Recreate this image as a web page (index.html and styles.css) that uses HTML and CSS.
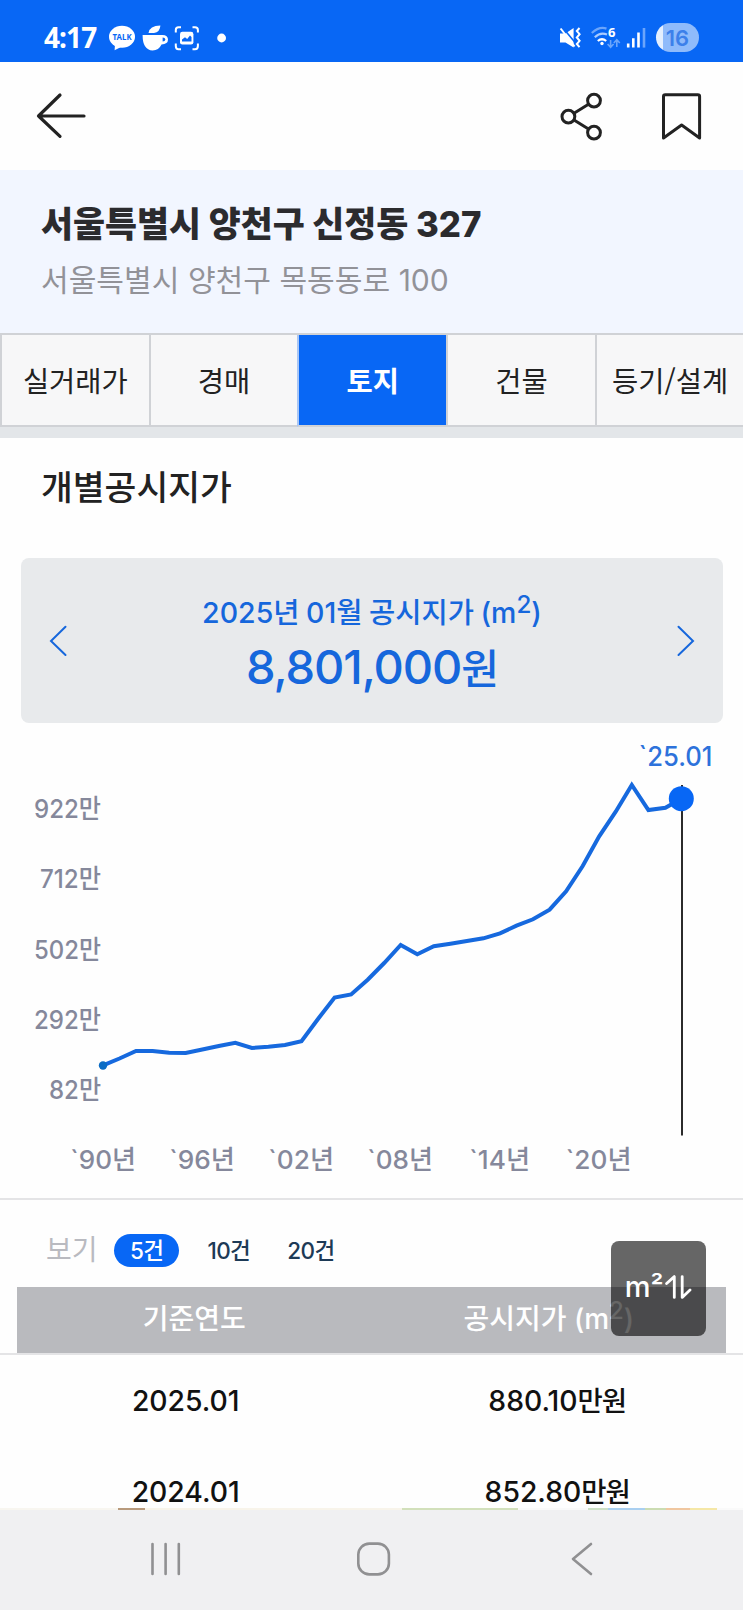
FILE: index.html
```html
<!DOCTYPE html>
<html lang="ko">
<head>
    <meta charset="UTF-8">
    <meta name="viewport" content="width=device-width, initial-scale=1.0">
    <title>개별공시지가</title>
    <link rel="stylesheet" href="styles.css">
</head>
<body>
    <div class="status-bar">
        <span class="time">4:17</span>
        <svg class="status-left" width="130" height="32" viewBox="104 22 130 32">
            <ellipse cx="122" cy="36.8" rx="13" ry="11" fill="#fff"/>
            <path d="M115 44 L114.6 50.3 L123 46 Z" fill="#fff"/>
            <text x="112.6" y="40" font-size="8.6" font-weight="700" textLength="19" lengthAdjust="spacingAndGlyphs" fill="#0867f5">TALK</text>
            <path d="M142.6 35 H162.4 Q168 35.2 168 39.6 Q168 44.2 161.5 44.6 Q158.8 50.5 152.6 50.5 Q142.6 50 142.6 35 Z" fill="#fff"/>
            <path d="M162.6 37.6 V41.6 Q165.3 41.5 165.3 39.6 Q165.3 37.6 162.6 37.6 Z" fill="#0867f5"/>
            <path d="M148.5 33 Q149.5 25.4 160.4 25.4 Q160 32 154 33 Z" fill="#fff"/>
            <path d="M175.8 32.5 V30 Q175.8 27.3 178.5 27.3 H181 M192.5 27.3 H195 Q197.9 27.3 197.9 30 V32.5 M197.9 43.5 V46 Q197.9 49.2 195 49.2 H192.5 M181 49.2 H178.5 Q175.8 49.2 175.8 46 V43.5" fill="none" stroke="#fff" stroke-width="2"/>
            <rect x="180" y="31.8" width="13.4" height="12.8" rx="2.4" fill="#fff"/>
            <path d="M182 41.5 V39.5 L185 37.2 L187.2 39 L190 35.5 L191.5 37 V41.5 Z" fill="#0867f5"/>
            <circle cx="221.6" cy="38" r="4.4" fill="#fff"/>
        </svg>
        <svg class="status-right" width="92" height="32" viewBox="558 22 92 32">
            <path d="M560 33.5 H565.5 L573.6 28 V47.5 L565.5 42.5 H560 Z" fill="#fff"/>
            <path d="M562.6 27.5 L575.5 43" stroke="#0867f5" stroke-width="1.6"/>
            <path d="M560.6 28.5 L574.6 46.5" stroke="#fff" stroke-width="2"/>
            <path d="M579.5 28 L576.8 31 L579.6 34.2 L576.8 37.5 L579.6 40.8 L576.8 44 L579.5 47.2" fill="none" stroke="#fff" stroke-width="2"/>
            <path d="M591.8 33 Q599.5 26 606.5 28.6" fill="none" stroke="#6ba5fb" stroke-width="2.2"/>
            <path d="M594.8 37.3 Q600.5 31.8 607 34.6" fill="none" stroke="#a9cbfd" stroke-width="2.2"/>
            <path d="M597.8 41 Q602 37.5 606.2 41" fill="none" stroke="#fff" stroke-width="2.2"/>
            <circle cx="602" cy="43.5" r="1.7" fill="#fff"/>
            <text x="608" y="37" font-size="13" font-weight="700" fill="#fff">6</text>
            <path d="M610.6 40 V47 M607.6 44 L610.6 47.3 L613.6 44 M616.8 47 V40 M613.8 43 L616.8 39.7 L619.8 43" fill="none" stroke="#6ba5fb" stroke-width="1.6"/>
            <path d="M628.2 43.5 V47.6 M633.3 38.2 V47.6 M638.5 32.6 V47.6" stroke="#fff" stroke-width="2.6"/>
            <path d="M644 28 V47.6" stroke="#6ba5fb" stroke-width="2.6"/>
        </svg>
        <span class="battery">16</span>
    </div>

    <header class="app-bar">
        <svg width="52" height="48" viewBox="35 92 52 48" fill="none" stroke="#222" stroke-width="3.2" stroke-linecap="round" stroke-linejoin="round">
            <path d="M60 95 L38.5 116 L60 136.3 M38.5 116 H84"/>
        </svg>
        <div class="app-actions">
            <svg width="44" height="50" viewBox="560 91 44 50" fill="none" stroke="#222" stroke-width="3">
                <circle cx="568.4" cy="116.6" r="6.4"/>
                <circle cx="594" cy="100.6" r="6.4"/>
                <circle cx="594" cy="132.6" r="6.4"/>
                <path d="M574 113.2 L588.5 104.2 M574 120 L588.5 129"/>
            </svg>
            <svg width="44" height="50" viewBox="660 91 44 50" fill="none" stroke="#222" stroke-width="3" stroke-linejoin="round">
                <path d="M663.5 138 V96.5 Q663.5 94.7 665.3 94.7 H697.8 Q699.6 94.7 699.6 96.5 V138 L681.6 125 Z"/>
            </svg>
        </div>
    </header>

    <section class="address">
        <h1>서울특별시 양천구 신정동 327</h1>
        <p>서울특별시 양천구 목동동로 100</p>
    </section>

    <nav class="tabs">
        <a class="tab">실거래가</a>
        <a class="tab">경매</a>
        <a class="tab active">토지</a>
        <a class="tab">건물</a>
        <a class="tab">등기/설계</a>
    </nav>

    <main class="content">
        <h2>개별공시지가</h2>

        <div class="price-card">
            <svg width="18" height="32" viewBox="0 0 18 32" fill="none" stroke="#1667dc" stroke-width="2" stroke-linecap="round">
                <path d="M16.5 1.8 L2 16 L16.5 30"/>
            </svg>
            <div class="price-text">
                <div class="price-label">2025년 01월 공시지가 (m<sup>2</sup>)</div>
                <div class="price-value">8,801,000<span>원</span></div>
            </div>
            <svg width="18" height="32" viewBox="0 0 18 32" fill="none" stroke="#1667dc" stroke-width="2" stroke-linecap="round">
                <path d="M1.5 1.8 L16 16 L1.5 30"/>
            </svg>
        </div>

        <svg class="chart" width="743" height="475" viewBox="0 723 743 475">
            <g class="axis">
                <text x="34" y="818" textLength="67" lengthAdjust="spacingAndGlyphs">922만</text>
                <text x="40" y="888" textLength="61" lengthAdjust="spacingAndGlyphs">712만</text>
                <text x="34" y="958.5" textLength="67" lengthAdjust="spacingAndGlyphs">502만</text>
                <text x="34" y="1028.5" textLength="67" lengthAdjust="spacingAndGlyphs">292만</text>
                <text x="49" y="1098.5" textLength="52" lengthAdjust="spacingAndGlyphs">82만</text>
                <text x="70" y="1168.5" textLength="66" lengthAdjust="spacingAndGlyphs">`90년</text>
                <text x="169" y="1168.5" textLength="66" lengthAdjust="spacingAndGlyphs">`96년</text>
                <text x="268" y="1168.5" textLength="66" lengthAdjust="spacingAndGlyphs">`02년</text>
                <text x="367" y="1168.5" textLength="66" lengthAdjust="spacingAndGlyphs">`08년</text>
                <text x="469" y="1168.5" textLength="61" lengthAdjust="spacingAndGlyphs">`14년</text>
                <text x="565.5" y="1168.5" textLength="66" lengthAdjust="spacingAndGlyphs">`20년</text>
            </g>
            <path d="M682 785 V1135.5" stroke="#2b2b2b" stroke-width="2"/>
            <polyline fill="none" stroke="#1669de" stroke-width="4" points="103,1065.3 119.5,1058.5 136,1051 152.6,1051 169.2,1052.8 185.7,1053 202.3,1049.5 218.8,1046 235.3,1042.8 251.9,1048 268.4,1046.8 285,1045 301.5,1041.3 318,1019 334.6,997.5 351.1,994.4 367.7,979.7 384.2,963 400.7,945 417.3,954.3 433.8,946.3 450.4,943.7 466.9,941 483.4,938.3 500,933.3 516.5,925.7 533,919.3 549.6,909.7 566.1,891.3 582.7,866 599.2,836.3 615.7,811.7 631.8,785 648.4,810 665.4,807.7 681.5,798.7"/>
            <circle cx="103" cy="1065.5" r="4.2" fill="#0c6cc4"/>
            <circle cx="681.3" cy="798.7" r="12.5" fill="#0867f5"/>
            <text class="marker" x="638.5" y="766" textLength="74" lengthAdjust="spacingAndGlyphs">`25.01</text>
        </svg>

        <div class="filter">
            <span class="filter-title">보기</span>
            <span class="chip on">5건</span>
            <span class="chip">10건</span>
            <span class="chip">20건</span>
        </div>

        <div class="table">
            <div class="row head">
                <div>기준연도</div>
                <div>공시지가 (m<sup>2</sup>)</div>
            </div>
            <div class="row first">
                <div>2025.01</div>
                <div>880.10<span>만원</span></div>
            </div>
            <div class="row">
                <div>2024.01</div>
                <div>852.80<span>만원</span></div>
            </div>
        </div>
    </main>

    <button class="unit-toggle">
        <span>m²</span>
        <svg width="27" height="24" viewBox="0 0 27 24" fill="none" stroke="#fff" stroke-width="2.8" stroke-linecap="round" stroke-linejoin="round">
            <path d="M1.6 8.5 L9.3 1.6 V22.4 M17.2 1.6 V22.4 L25 15"/>
        </svg>
    </button>

    <div class="map-edge"></div>
    <div class="system-nav">
        <svg width="743" height="34" viewBox="0 0 743 34" fill="none" stroke="#909092" stroke-width="2.6" stroke-linecap="round" stroke-linejoin="round">
            <path d="M152.5 2 V32 M165.6 2 V32 M178.8 2 V32"/>
            <rect x="358.3" y="1.6" width="30.6" height="30.8" rx="11"/>
            <path d="M591 2 L573 17 L591 32"/>
        </svg>
    </div>
</body>
</html>
```

FILE: styles.css
```css
* {
    box-sizing: border-box;
}
body {
    position: relative;
    display: flex;
    flex-direction: column;
    width: 743px;
    height: 1610px;
    margin: 0;
    overflow: hidden;
    background-color: #fefefe;
    color: #222;
    font-family: Inter, "Noto Sans CJK KR", sans-serif;
}
h1, h2, p {
    margin: 0;
    font-weight: 400;
}
svg {
    display: block;
    flex: none;
}
sup {
    font-size: 0.85em;
    line-height: 0;
    vertical-align: 0.42em;
}

/* 상태바 */
.status-bar {
    display: flex;
    flex: none;
    align-items: center;
    height: 62px;
    padding: 13px 44px 0 44px;
    background-color: #0867f5;
    color: #fff;
    font-family: "Noto Sans", sans-serif;
}
.time {
    width: 60px;
    margin-top: -2px;
    font-size: 28px;
    font-weight: 700;
    line-height: 32px;
    letter-spacing: -0.9px;
}
.status-right {
    margin-left: auto;
}
.battery {
    width: 43px;
    height: 29px;
    margin-left: 6px;
    border-radius: 15px;
    background: linear-gradient(90deg, #e4effe 7px, #8fbbfb 7px);
    color: #3c80ea;
    font-family: Inter, sans-serif;
    font-size: 22px;
    font-weight: 600;
    line-height: 30px;
    text-align: center;
}

.app-bar {
    display: flex;
    flex: none;
    justify-content: space-between;
    align-items: center;
    height: 108px;
    padding: 0 39px 0 35px;
}
.app-actions {
    display: flex;
    gap: 56px;
}

.address {
    flex: none;
    height: 163px;
    padding: 31px 41px 0;
    background-color: #f2f6ff;
    white-space: nowrap;
}
.address h1 {
    color: #2b2b2e;
    font-size: 34.8px;
    font-weight: 800;
    line-height: 46px;
}
.address p {
    margin-top: 12px;
    color: #929298;
    font-size: 30.1px;
    line-height: 42px;
}

/* 탭 */
.tabs {
    display: flex;
    flex: none;
    height: 105px;
    border-top: 2px solid #d0d2d6;
    border-bottom: 11px solid #e3e6e9;
    font-family: "Noto Sans CJK KR", sans-serif;
}
.tab {
    width: 148.7px;
    flex: none;
    border-left: 2px solid #d0d2d6;
    border-bottom: 2px solid #d0d2d6;
    background-color: #f7f7f8;
    font-size: 28.5px;
    line-height: 90px;
    text-align: center;
    white-space: nowrap;
}
.tab.active {
    background-color: #0867f5;
    border-left-color: #a9c6f5;
    color: #fff;
    font-weight: 700;
}

.content {
    flex: 1;
    min-height: 0;
    overflow: hidden;
}
.content h2 {
    height: 120px;
    padding: 26px 41px 0;
    font-size: 34.6px;
    font-weight: 500;
    line-height: 46px;
}
.price-card {
    display: flex;
    justify-content: space-between;
    align-items: center;
    height: 165px;
    margin: 0 20px 0 21px;
    padding: 0 28px;
    border-radius: 8px;
    background-color: #e8eaec;
    color: #1667dc;
}
.price-text {
    padding-top: 12px;
    font-weight: 500;
    text-align: center;
    white-space: nowrap;
}
.price-label {
    font-size: 28.5px;
    line-height: 42px;
    word-spacing: -1px;
}
.price-value {
    font-size: 47px;
    line-height: 66px;
    letter-spacing: -1.1px;
}
.price-value span {
    font-size: 41px;
}

/* 차트 */
.axis text {
    fill: #85889b;
    font-size: 26px;
    font-weight: 500;
}
.marker {
    fill: #2d72db;
    font-size: 27px;
    font-weight: 500;
}

.filter {
    display: flex;
    align-items: center;
    height: 89px;
    padding: 13px 0 0 46px;
    border-top: 2px solid #e4e4e6;
}
.filter-title {
    width: 68px;
    margin-top: -4px;
    color: #b9bac0;
    font-size: 28px;
}
.chip {
    height: 33px;
    margin-right: 5px;
    padding: 0 16px;
    border-radius: 17px;
    color: #1d3a56;
    font-size: 22.5px;
    font-weight: 500;
    line-height: 33px;
    letter-spacing: -0.6px;
}
.chip.on {
    margin-right: 12px;
    background-color: #0867f5;
    color: #fff;
}

.row {
    display: flex;
    height: 93px;
    color: #111;
    font-size: 28.3px;
    font-weight: 500;
    line-height: 93px;
    text-align: center;
    white-space: nowrap;
}
.row div {
    flex: 1;
}
.row span {
    font-size: 27.5px;
    letter-spacing: -1px;
}
.row.head {
    height: 66px;
    margin: 0 17px;
    background-color: #b9babe;
    color: #fff;
    font-size: 28px;
    line-height: 64px;
}
.row.first {
    border-top: 2px solid #e4e4e6;
}

.unit-toggle {
    position: absolute;
    top: 1241px;
    left: 611px;
    display: flex;
    justify-content: center;
    align-items: center;
    gap: 2px;
    width: 95px;
    height: 95px;
    padding: 0 0 4px;
    border: 0;
    border-radius: 8px;
    background-color: rgba(0, 0, 0, 0.6);
    color: #fff;
    font-family: Inter, sans-serif;
    font-size: 29px;
    font-weight: 500;
}

/* 하단 지도 가장자리 */
.map-edge {
    flex: none;
    height: 2px;
    background: linear-gradient(90deg, #f8f6f0 118px, #b89a7c 118px 145px, #f8f4ea 145px 402px, #d2e0bb 402px 518px, #fafafa 518px 588px, #cde0c4 588px 608px, #a9cff0 608px 645px, #cbdcb2 645px 666px, #f0c7a0 666px 690px, #f5e7a6 690px 717px, #fafafa 717px);
}
.system-nav {
    flex: none;
    height: 100px;
    padding-top: 32px;
    background-color: #f0f0f2;
}
```
